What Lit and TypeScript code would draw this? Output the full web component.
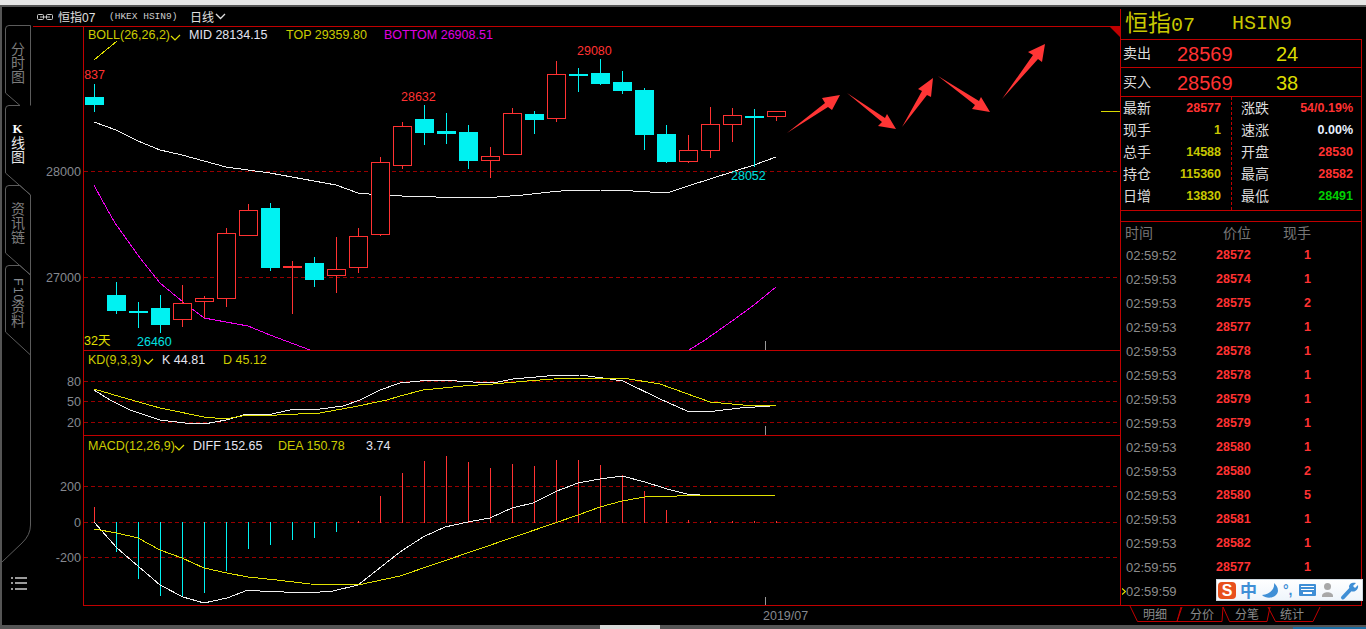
import { LitElement, html, css, svg } from "lit";
import { customElement } from "lit/decorators.js";

const RED = "#ff3232", CY = "#00f2f2", YE = "#cccc00", MA = "#f000f0", WH = "#f0f0f0";
type C = [number, number, number, number, number];
// kind (0 cyan, 1 red hollow, 2 red solid), wick top, wick bottom, body top, body bottom
const candles: C[] = [
  [0,84,112,97,105],[0,282,314,295,311],[0,302,328,311,313],[0,295,333,308,325],[1,285,327,303,320],[1,296,318,298,302],
  [1,228,307,233,299],[1,204,236,210,236],[0,203,271,208,268],[2,261,314,266,268],[0,257,287,263,280],[1,237,293,269,276],
  [1,228,273,236,268],[1,157,236,162,235],[1,122,169,126,166],[0,105,145,119,133],[0,113,144,131,134],[0,125,169,132,161],
  [1,147,178,156,161],[1,108,155,113,155],[0,111,134,114,120],[1,61,122,74,119],[0,68,92,74,76],[0,59,85,73,84],
  [0,71,94,82,91],[0,88,150,90,135],[0,125,163,134,162],[1,135,163,150,162],[1,107,158,124,151],[1,108,142,115,125],
  [0,109,167,116,118],[1,111,121,111,117],
];
const bars = [507,552,579,596,597,593,571,549,545,540,538,532,521,496,473,461,456,462,468,464,466,460,460,465,475,491,510,520,521,521,521,521];
const mid = "94,122 116,130 138,141 160,150 182,155 204,161 226,167 248,170 270,173 292,177 314,181 336,185 358,193 380,195 402,196 424,196 436,197 468,197 497,197 523,195 550,192 573,190 600,190 633,191 667,193 688,186 710,179 732,172 754,165 776,157";
const low = "94,185 102,200 115,223 140,258 160,283 183,302 204,318 226,322 248,326 270,335 310,350 689,350 705,340 732,321 754,305 776,287";
const kLine = "94,390 110,400 130,410 160,420 185,423 204,424 226,420 247,414 267,415 290,410 320,409 343,406 360,400 380,390 400,383 420,381 440,380 473,382 493,383 513,379 547,376 580,375 603,378 623,381 660,399 687,411 715,411 740,408 770,406 776,405";
const dLine = "94,389 128,399 160,408 204,417 226,419 247,415 277,415 320,413 353,407 387,400 400,396 423,390 463,386 493,384 527,381 567,378 623,378 660,384 710,402 743,405 776,405";
const diff = "94,522 117,548 160,585 183,597 204,603 227,598 248,590 260,591 307,593 333,591 358,585 400,552 423,537 445,527 468,522 490,518 512,508 533,503 557,491 578,483 600,479 622,476 645,482 667,489 687,494 700,495";
const dea = "94,529 117,533 138,538 160,550 182,558 204,568 227,573 248,577 277,580 310,584 358,585 400,576 555,523 578,515 600,507 622,501 645,497 655,496 677,496 776,495";
const arrows = [
  "787,133 828,107 832,110 840,95 822,98 825,103",
  "847,93 885,118 887,114 896,129 878,126 882,122",
  "902,127 927,95 931,97 933,78 918,89 922,91",
  "938,76 979,101 981,97 990,112 972,109 975,105",
  "1002,99 1038,59 1042,62 1045,44 1028,52 1033,55",
];
const stats: [string, string, string, string, string, string][] = [
  ["最新","28577","y-r","涨跌","54/0.19%","y-r"],
  ["现手","1","y-y","速涨","0.00%","y-w"],
  ["总手","14588","y-y","开盘","28530","y-r"],
  ["持仓","115360","y-y","最高","28582","y-r"],
  ["日增","13830","y-y","最低","28491","y-g"],
];
const ticks: [string, string, string][] = [
  ["02:59:52","28572","1"],["02:59:53","28574","1"],["02:59:53","28575","2"],["02:59:53","28577","1"],["02:59:53","28578","1"],
  ["02:59:53","28578","1"],["02:59:53","28579","1"],["02:59:53","28579","1"],["02:59:53","28580","1"],["02:59:53","28580","2"],
  ["02:59:53","28580","5"],["02:59:53","28581","1"],["02:59:53","28582","1"],["02:59:55","28577","1"],["02:59:59","",""],
];

@customElement("app-root")
export class AppRoot extends LitElement {
  static styles = css`
    :host { display: block; position: relative; width: 1366px; height: 629px; overflow: hidden; background: #000;
      font-family: "Liberation Sans", "Noto Sans CJK SC", sans-serif; color: #ddd; }
    svg { display: block; }
    svg text { font-family: "Liberation Sans", "Noto Sans CJK SC", sans-serif; }
    .chrome { height: 5px; background: #e6e6e6; border-bottom: 2px solid #555; }
    .body { display: flex; height: 618px; }
    .rail { width: 33px; box-sizing: border-box; border-left: 2px solid #555; flex: none; }
    .main { width: 1087px; flex: none; display: flex; flex-direction: column; }
    .quote { height: 19px; display: flex; align-items: center; padding-left: 4px; gap: 5px; font-size: 12px; color: #e0e0e0; }
    .quote .link { width: 16px; height: 6px; }
    .quote .sym { width: 46px; }
    .quote .mono { font-family: "Liberation Mono", monospace; font-size: 9.5px; width: 76px; color: #ccc; }
    .quote .caret { margin-left: -4px; }
    .side { width: 246px; flex: none; padding-top: 2px; box-sizing: border-box; }
    .inner { width: 242px; box-sizing: border-box; border-left: 1px solid #c00000; }
    .title { height: 31px; box-sizing: border-box; border-bottom: 1px solid #c00000; display: flex; align-items: center; padding-left: 4px; color: #c8c800; font-size: 23px; line-height: 30px; }
    .title .a { width: 107px; }
    .title .m { font-family: "Liberation Mono", monospace; font-size: 20px; }
    .sec { box-sizing: border-box; border-bottom: 1px solid #c00000; border-right: 1px solid #c00000; }
    .quoteRow { display: grid; grid-template-columns: 54px 99px auto; align-items: center; padding-left: 2px; font-size: 14px; }
    .ask { height: 28px; } .bid { height: 29px; }
    .quoteRow .lb { margin-top: -3px; }
    .quoteRow .p { font-size: 20px; color: #ff3232; margin-top: 2px; }
    .quoteRow .q { font-size: 20px; color: #dcdc00; margin-top: 2px; }
    .statGrid { height: 114px; display: grid; grid-template-columns: 111px 1fr; }
    .statCol { box-sizing: border-box; }
    .statCol.l { border-right: 1px dashed #c00000; padding: 0 10px 0 2px; }
    .statCol.r { padding: 0 8px 0 9px; }
    .stat { height: 22px; display: flex; justify-content: space-between; align-items: center; font-size: 14px; }
    .stat span { margin-top: -3px; }
    .stat b { font-size: 12.5px; }
    .y-r { color: #ff3232; } .y-y { color: #c8c800; } .y-w { color: #e8f0ff; } .y-g { color: #00d000; }
    .gap { height: 11px; }
    .list { height: 384px; }
    .head, .row { display: grid; grid-template-columns: 90px 60px 35px; padding-left: 5px; position: relative; }
    .head { height: 21px; align-items: center; font-size: 14px; color: #777; }
    .head span { margin-top: -2px; white-space: nowrap; }
    .head span:nth-child(1) { margin-left: -1px; }
    .head span:nth-child(2) { padding-left: 7px; }
    .head span:nth-child(3), .row span:nth-child(3) { text-align: right; }
    .row { height: 24px; align-items: center; font-size: 13px; }
    .row .t { color: #8c8c8c; }
    .row .pr, .row .qt { color: #ff3232; font-weight: bold; font-size: 12.5px; }
    .row .cur { position: absolute; left: 1px; top: 9px; }
    .ime { position: absolute; left: 1216px; top: 579px; }
    .bottom { height: 4px; display: flex; background: #555; }
    .thumb { width: 60px; margin-left: 600px; background: #d8d8d8; }
    .task { width: 73px; height: 2px; margin-left: auto; align-self: flex-end; background: #1c6ea4; }
  `;

  private chart() {
    const T = (x: number, y: number, t: string, c: string) =>
      svg`<text x=${x} y=${y} fill=${c} font-size="12.5">${t}</text>`;
    const chev = (x: number, y: number, c: string) =>
      svg`<polyline points="${x},${y} ${x + 4},${y + 4} ${x + 9},${y - 1}" fill="none" stroke=${c} stroke-width="1.2"/>`;
    const grid = (y: number) => svg`<line x1="84" x2="1120" y1=${y + 0.5} y2=${y + 0.5} stroke="#990000" stroke-dasharray="4 3" shape-rendering="crispEdges"/>`;
    const axis = (y: number, t: string) => svg`<text x="81" y=${y + 4.5} fill="#85898f" font-size="12.6" text-anchor="end">${t}</text>`;
    const line = (p: string, c: string) => svg`<polyline points=${p} fill="none" stroke=${c} stroke-width="1"/>`;
    return svg`
      <svg width="1087" height="599" viewBox="33 26 1087 599">
        <defs>
          <clipPath id="k"><rect x="84" y="27" width="1036" height="323"/></clipPath>
          <clipPath id="kd"><rect x="84" y="351" width="1036" height="84"/></clipPath>
          <clipPath id="m"><rect x="84" y="436" width="1036" height="169"/></clipPath>
        </defs>
        ${[171,277,381,401,422,486,522,557].map(grid)}
        ${axis(171,"28000")}${axis(277,"27000")}${axis(381,"80")}${axis(401,"50")}${axis(422,"20")}
        ${axis(486,"200")}${axis(522,"0")}${axis(557,"-200")}
        <g clip-path="url(#k)">
          <g shape-rendering="crispEdges">
            ${line("94,60 117,41", "#e0e000")}
            ${line(mid, WH)}
            ${line(low, MA)}
            ${candles.map((d, i) => {
              const x = 94 + 22 * i, [k, t, b, bt, bb] = d, col = k === 0 ? CY : RED;
              return svg`<rect x=${x} y=${t} width="1" height=${b - t} fill=${col}/>
                ${k === 1
                  ? svg`<rect x=${x - 8.5} y=${bt + 0.5} width="18" height=${bb - bt - 1} fill="#000" stroke=${col}/>`
                  : svg`<rect x=${x - 9} y=${bt} width="19" height=${bb - bt} fill=${col}/>`}`;
            })}
          </g>
          <text x="105" y="79" fill=${RED} font-size="12.5" text-anchor="end">28837</text>
          ${T(401, 101, "28632", RED)}${T(577, 55, "29080", RED)}${T(731, 180, "28052", "#00e0e0")}${T(137, 346, "26460", "#00e0e0")}
          <text x="84" y="345" fill="#e0e000" font-size="12.5">32天</text>
          ${T(88, 38.5, "BOLL(26,26,2)", YE)}${chev(171, 36, "#e0e000")}
          ${T(189, 38.5, "MID 28134.15", "#e4e4f0")}${T(286, 38.5, "TOP 29359.80", YE)}${T(384, 38.5, "BOTTOM 26908.51", "#e000e0")}
        </g>
        <g clip-path="url(#kd)">
          <g shape-rendering="crispEdges">${line(kLine, WH)}${line(dLine, "#e0e000")}</g>
          ${T(88, 363.5, "KD(9,3,3)", YE)}${chev(144, 360, "#e0e000")}
          ${T(162, 363.5, "K 44.81", "#e4e4f0")}${T(223, 363.5, "D 45.12", YE)}
        </g>
        <g clip-path="url(#m)">
          <g shape-rendering="crispEdges">
            ${bars.map((t, i) => {
              const x = 94 + 22 * i, cy = i > 0 && i < 12;
              return cy
                ? svg`<rect x=${x} y="522" width="1" height=${t - 522} fill=${CY}/>`
                : svg`<rect x=${x} y=${t} width="1" height=${Math.max(1, 523 - t)} fill=${RED}/>`;
            })}
            ${line(diff, WH)}${line(dea, "#e0e000")}
          </g>
          ${T(88, 449.5, "MACD(12,26,9)", YE)}${chev(175, 446, "#e0e000")}
          ${T(193, 449.5, "DIFF 152.65", "#e4e4f0")}${T(278, 449.5, "DEA 150.78", YE)}${T(366, 449.5, "3.74", "#e4e4f0")}
        </g>
        <g fill="#999" shape-rendering="crispEdges">
          <rect x="765" y="341" width="1" height="9"/><rect x="765" y="426" width="1" height="9"/><rect x="765" y="597" width="1" height="8"/>
        </g>
        <rect x="1101" y="111" width="19" height="1" fill="#d8d800"/>
        <g stroke="#c00000" shape-rendering="crispEdges">
          <line x1="33" x2="1120" y1="26.5" y2="26.5"/>
          <line x1="83.5" x2="83.5" y1="26" y2="606"/>
          <line x1="84" x2="1120" y1="350.5" y2="350.5"/>
          <line x1="84" x2="1120" y1="435.5" y2="435.5"/>
          <line x1="84" x2="1120" y1="605.5" y2="605.5"/>
        </g>
        <polygon points="1110,27 1120,27 1120,37" fill="#c00000"/>
        ${arrows.map((p) => svg`<polygon points=${p} fill="#ff3535"/>`)}
        <text x="763" y="620" fill="#85898f" font-size="12.5">2019/07</text>
      </svg>`;
  }

  private rail() {
    const ch = (s: string, y: number, c = "#7c7c7c", x = 18) => svg`<text x=${x} y=${y} fill=${c} font-size="14" text-anchor="middle">${s}</text>`;
    const st = "#5c5c5c";
    return svg`
      <svg width="31" height="618" viewBox="2 7 31 618">
        <g fill="none" stroke=${st}>
          <path d="M30.5 105.5V25.5H9Q5.5 25.5 5.5 29V93L20 105.5"/>
          <path d="M20 105.5H9Q5.5 105.5 5.5 109V173L30.5 195"/>
          <path d="M5.5 253V189Q5.5 185.5 9 185.5H20L30.5 195V275L5.5 253Z"/>
          <path d="M5.5 332V269Q5.5 265.5 9 265.5H20L30.5 275V525Q30.5 535 22 543L2 562"/>
          <path d="M5.5 332L30.5 355"/>
        </g>
        ${ch("分", 54)}${ch("时", 68)}${ch("图", 82)}
        <text x="17.5" y="133" fill="#fff" font-size="13" font-weight="bold" text-anchor="middle" style="font-family:'Liberation Serif',serif">K</text>
        ${ch("线", 148, "#e8e8e8")}${ch("图", 162, "#e8e8e8")}
        ${ch("资", 214)}${ch("讯", 228)}${ch("链", 242)}
        <text transform="translate(14 278) rotate(90)" fill="#85898f" font-size="12.5" letter-spacing="1">F10</text>
        ${ch("资", 312)}${ch("料", 326)}
        <g fill="#9a9a9a" shape-rendering="crispEdges">
          <rect x="11" y="577" width="2" height="2"/><rect x="15" y="577" width="12" height="2"/>
          <rect x="11" y="582" width="2" height="2"/><rect x="15" y="582" width="12" height="2"/>
          <rect x="11" y="588" width="2" height="2"/><rect x="15" y="588" width="12" height="2"/>
        </g>
      </svg>`;
  }

  private tabs() {
    const lbl = (x: number, t: string) => svg`<text x=${x} y="618" fill="#8a8a8a" font-size="12" text-anchor="middle">${t}</text>`;
    return svg`
      <svg width="246" height="20" viewBox="1120 605 246 20">
        <g fill="none" stroke="#c00000" stroke-width="1">
          <polyline points="1130,605 1137.5,620.5 1177,620.5 1182,606"/>
          <polyline points="1181,606 1177,620.5 1222,620.5 1223,606"/>
          <polyline points="1223,606 1229.5,620.5 1267,620.5 1270,606"/>
          <polyline points="1268,606 1275.5,620.5 1313,620.5 1320,606"/>
        </g>
        ${lbl(1155, "明细")}${lbl(1202, "分价")}${lbl(1247, "分笔")}${lbl(1292, "统计")}
      </svg>`;
  }

  private ime() {
    return svg`
      <svg class="ime" width="147" height="22" viewBox="1216 579 147 22">
        <defs><linearGradient id="ig" x1="0" x2="0" y1="0" y2="1"><stop offset="0" stop-color="#fff"/><stop offset="1" stop-color="#eef5fb"/></linearGradient></defs>
        <rect x="1216.5" y="579.5" width="146" height="21" fill="url(#ig)" stroke="#cfd8e0"/>
        <rect x="1218" y="582" width="18" height="17" rx="4" fill="#e8501c"/>
        <text x="1227" y="596" fill="#fff" font-size="16" font-weight="bold" text-anchor="middle">S</text>
        <text x="1248.5" y="596.5" fill="#3f8fd6" font-size="17" font-weight="bold" text-anchor="middle">中</text>
        <path d="M1274 583C1275 589 1270 594 1262 595C1267 600 1277 598 1278 591C1278 587 1276 585 1274 583Z" fill="#3f8fd6"/>
        <text x="1283" y="595" fill="#3f8fd6" font-size="14" font-weight="bold">°,</text>
        <rect x="1299" y="584" width="17" height="12" rx="1" fill="#3f8fd6"/>
        <g fill="#fff" shape-rendering="crispEdges">
          <rect x="1301" y="586" width="13" height="1"/><rect x="1301" y="589" width="13" height="1"/><rect x="1303" y="592" width="9" height="2"/>
        </g>
        <circle cx="1327.5" cy="586.5" r="3.5" fill="#a8a8a8"/>
        <path d="M1322 596C1322 591 1333 591 1333 596V597H1322Z" fill="#a8a8a8"/>
        <path d="M1343 597.5L1351 589" stroke="#3f8fd6" stroke-width="4" stroke-linecap="round"/>
        <path d="M1349 587C1349 583 1353 582 1356 583L1353 586L1355 588L1358 585C1359 589 1355 593 1351 591Z" fill="#3f8fd6"/>
      </svg>`;
  }

  render() {
    return html`
      <div class="chrome"></div>
      <div class="body">
        <div class="rail">${this.rail()}</div>
        <div class="main">
          <div class="quote">
            <svg class="link" viewBox="0 0 16 6"><rect x="0.5" y="0.5" width="6" height="5" rx="1" fill="none" stroke="#ccc"/><rect x="9.5" y="0.5" width="6" height="5" rx="1" fill="none" stroke="#ccc"/><path d="M3 3H13" stroke="#ccc"/></svg>
            <span class="sym">恒指07</span>
            <span class="mono">(HKEX HSIN9)</span>
            <span>日线</span>
            <svg class="caret" width="11" height="7" viewBox="0 0 11 7"><polyline points="1,1 5.5,5.5 10,1" fill="none" stroke="#e0e0e0" stroke-width="1.3"/></svg>
          </div>
          ${this.chart()}
        </div>
        <div class="side">
          <div class="inner">
            <div class="title"><span class="a">恒指<span class="m">07</span></span><span class="m">HSIN9</span></div>
            <div class="sec quoteRow ask"><span class="lb">卖出</span><span class="p">28569</span><span class="q">24</span></div>
            <div class="sec quoteRow bid"><span class="lb">买入</span><span class="p">28569</span><span class="q">38</span></div>
            <div class="sec statGrid">
              <div class="statCol l">${stats.map((s) => html`<div class="stat"><span>${s[0]}</span><b class=${s[2]}>${s[1]}</b></div>`)}</div>
              <div class="statCol r">${stats.map((s) => html`<div class="stat"><span>${s[3]}</span><b class=${s[5]}>${s[4]}</b></div>`)}</div>
            </div>
            <div class="sec gap"></div>
            <div class="sec list">
              <div class="head"><span>时间</span><span>价位</span><span>现手</span></div>
              ${ticks.map((r, i) => html`<div class="row">
                ${i === ticks.length - 1 ? html`<svg class="cur" width="4" height="7" viewBox="0 0 4 7"><polyline points="0,0.5 3.5,3.5 0,6.5" fill="none" stroke="#e8e800" stroke-width="1.2"/></svg>` : ""}
                <span class="t">${r[0]}</span><span class="pr">${r[1]}</span><span class="qt">${r[2]}</span></div>`)}
            </div>
          </div>
          ${this.tabs()}
        </div>
      </div>
      <div class="bottom"><div class="thumb"></div><div class="task"></div></div>
      ${this.ime()}
    `;
  }
}
